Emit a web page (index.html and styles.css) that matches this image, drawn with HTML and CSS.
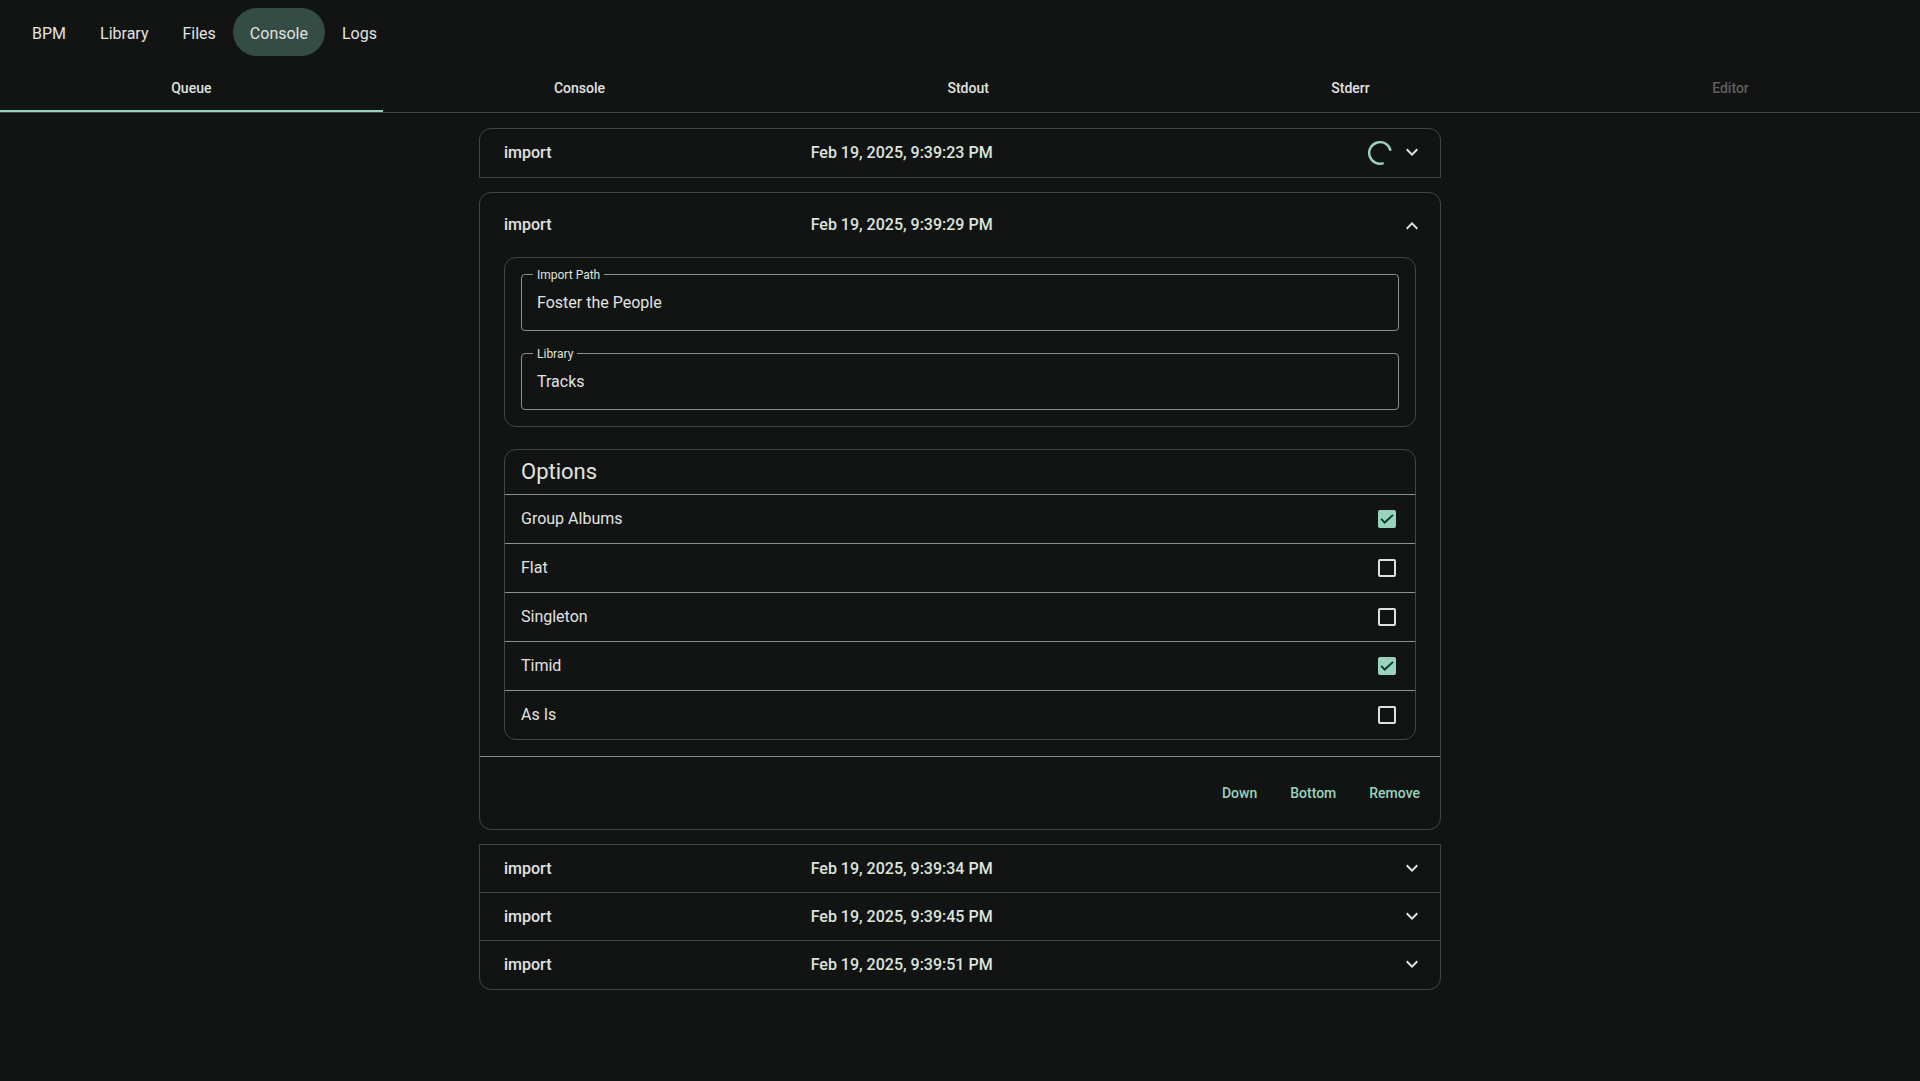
FILE: index.html
```html
<!DOCTYPE html>
<html lang="en">
<head>
<meta charset="utf-8">
<meta name="viewport" content="width=device-width, initial-scale=1">
<title>BPM – Console</title>
<link rel="stylesheet" href="styles.css">
</head>
<body>
<svg class="sprite" aria-hidden="true">
  <symbol id="chevron" viewBox="0 1 24 24"><path d="M16.59 8.59 12 13.17 7.41 8.59 6 10l6 6 6-6z"/></symbol>
</svg>
<header>
  <nav class="nav">
    <a class="nav-link" href="#bpm">BPM</a>
    <a class="nav-link" href="#library">Library</a>
    <a class="nav-link" href="#files">Files</a>
    <a class="nav-link nav-link-active" href="#console" aria-current="page">Console</a>
    <a class="nav-link" href="#logs">Logs</a>
  </nav>
  <div class="tabs" role="tablist">
    <button class="tab tab-active" type="button" role="tab" aria-selected="true">Queue</button>
    <button class="tab" type="button" role="tab">Console</button>
    <button class="tab" type="button" role="tab">Stdout</button>
    <button class="tab" type="button" role="tab">Stderr</button>
    <button class="tab" type="button" role="tab" disabled>Editor</button>
  </div>
</header>
<main class="queue">
  <section class="group group-first">
    <button class="row" type="button" aria-expanded="false">
      <span class="row-title">import</span>
      <span class="row-info">Feb 19, 2025, 9:39:23 PM
        <svg class="spinner" viewBox="0 0 24 24" aria-hidden="true"><path d="M15.7 22.1A10.8 10.8 0 1 1 22.6 9.8"/></svg>
      </span>
      <svg class="chevron" aria-hidden="true"><use href="#chevron"/></svg>
    </button>
  </section>

  <section class="group group-open">
    <button class="row row-open" type="button" aria-expanded="true">
      <span class="row-title">import</span>
      <span class="row-info">Feb 19, 2025, 9:39:29 PM</span>
      <svg class="chevron chevron-up" aria-hidden="true"><use href="#chevron"/></svg>
    </button>
    <div class="details">
      <div class="card fields">
        <div class="field">
          <label class="field-label" for="import-path">Import Path</label>
          <input class="field-input" id="import-path" type="text" value="Foster the People" readonly>
        </div>
        <div class="field">
          <label class="field-label" for="library">Library</label>
          <input class="field-input" id="library" type="text" value="Tracks" readonly>
        </div>
      </div>
      <div class="card">
        <h2 class="options-title">Options</h2>
        <label class="option">Group Albums<input class="check" type="checkbox" checked></label>
        <label class="option">Flat<input class="check" type="checkbox"></label>
        <label class="option">Singleton<input class="check" type="checkbox"></label>
        <label class="option">Timid<input class="check" type="checkbox" checked></label>
        <label class="option">As Is<input class="check" type="checkbox"></label>
      </div>
    </div>
    <div class="actions">
      <button class="action" type="button">Down</button>
      <button class="action" type="button">Bottom</button>
      <button class="action" type="button">Remove</button>
    </div>
  </section>

  <section class="group group-last">
    <button class="row" type="button" aria-expanded="false">
      <span class="row-title">import</span>
      <span class="row-info">Feb 19, 2025, 9:39:34 PM</span>
      <svg class="chevron" aria-hidden="true"><use href="#chevron"/></svg>
    </button>
    <button class="row" type="button" aria-expanded="false">
      <span class="row-title">import</span>
      <span class="row-info">Feb 19, 2025, 9:39:45 PM</span>
      <svg class="chevron" aria-hidden="true"><use href="#chevron"/></svg>
    </button>
    <button class="row" type="button" aria-expanded="false">
      <span class="row-title">import</span>
      <span class="row-info">Feb 19, 2025, 9:39:51 PM</span>
      <svg class="chevron" aria-hidden="true"><use href="#chevron"/></svg>
    </button>
  </section>
</main>
</body>
</html>
```
FILE: styles.css
```css
:root {
  --bg: #121413;
  --text: #e1e3e0;
  --text-soft: #dbe5de;
  --primary: #99d3bc;
  --on-primary: #003829;
  --active: #344c43;
  --border: #404945;
  --outline: #89938e;
}

* {
  box-sizing: border-box;
}

body {
  margin: 0;
  background: var(--bg);
  color: var(--text);
  font: 400 16px/24px Roboto, "Liberation Sans", sans-serif;
}

button,
input {
  font: inherit;
  color: inherit;
}

button {
  border: 0;
  padding: 0;
  background: none;
  cursor: pointer;
}

.sprite {
  display: none;
}

.nav {
  display: flex;
  padding: 8px 15px;
}

.nav-link {
  padding: 14px 17px 10px;
  border-radius: 24px;
  color: var(--text);
  text-decoration: none;
}

.nav-link-active {
  background: var(--active);
}

.tabs {
  display: flex;
  border-bottom: 1px solid var(--border);
}

.tab {
  flex: 1 1 auto;
  height: 48px;
  padding: 0 24px;
  border-top: 2px solid transparent;
  border-bottom: 2px solid transparent;
  font-size: 14px;
  font-weight: 500;
}

.tab-active {
  border-bottom-color: var(--primary);
}

.tab:disabled {
  color: #5d5f5e;
  cursor: default;
}

.queue {
  display: flex;
  flex-direction: column;
  gap: 14px;
  max-width: 962px;
  margin: 15px auto;
}

.group {
  border: 1px solid var(--border);
}

.group-first {
  border-radius: 12px 12px 0 0;
}

.group-open {
  border-radius: 12px;
}

.group-last {
  border-radius: 0 0 12px 12px;
}

.row {
  display: flex;
  align-items: center;
  width: 100%;
  height: 48px;
  padding: 0 16px 0 24px;
  font-weight: 500;
  text-align: left;
}

.row:not(:last-child):not(.row-open) {
  border-bottom: 1px solid var(--border);
}

.row-open {
  height: 64px;
}

.row-title {
  flex: 1 1 0;
  margin-right: 16px;
}

.row-info {
  display: flex;
  flex: 2 1 0;
  align-items: center;
  justify-content: space-between;
  margin-right: 8px;
  color: var(--text-soft);
}

.spinner {
  width: 24px;
  height: 24px;
  fill: none;
  stroke: var(--primary);
  stroke-width: 2.4;
}

.chevron {
  width: 24px;
  height: 24px;
  fill: var(--text-soft);
}

.chevron-up {
  transform: rotate(180deg);
}

.details {
  display: flex;
  flex-direction: column;
  gap: 22px;
  padding: 0 24px 16px;
}

.card {
  border: 1px solid var(--border);
  border-radius: 12px;
}

.fields {
  display: flex;
  flex-direction: column;
  gap: 22px;
  padding: 16px;
}

.field {
  position: relative;
}

.field-label {
  position: absolute;
  top: -7px;
  left: 12px;
  padding: 0 4px;
  background: var(--bg);
  color: var(--text-soft);
  font-size: 12px;
  line-height: 16px;
}

.field-input {
  display: block;
  width: 100%;
  height: 57px;
  padding: 0 15px;
  border: 1px solid var(--outline);
  border-radius: 4px;
  outline: 0;
  background: none;
}

.options-title {
  margin: 0;
  padding: 8px 16px;
  border-bottom: 1px solid var(--outline);
  font-size: 22px;
  font-weight: 400;
  line-height: 28px;
}

.option {
  display: flex;
  align-items: center;
  justify-content: space-between;
  height: 49px;
  padding: 0 16px;
  border-bottom: 1px solid var(--outline);
}

.option:last-child {
  height: 48px;
  border-bottom: 0;
}

.check {
  width: 18px;
  height: 18px;
  margin: 0 3px;
  border: 2px solid var(--text-soft);
  border-radius: 2px;
  appearance: none;
}

.check:checked {
  border: 0;
  background: var(--primary);
}

.check:checked::before {
  display: block;
  width: 18px;
  height: 18px;
  background: var(--on-primary);
  clip-path: polygon(14% 53%, 21% 46%, 37% 62%, 80% 23%, 87% 30%, 37% 78%);
  content: "";
}

.actions {
  display: flex;
  justify-content: flex-end;
  gap: 9px;
  padding: 16px 8px;
  border-top: 1px solid var(--outline);
}

.action {
  height: 40px;
  padding: 0 12px;
  color: var(--primary);
  font-size: 14px;
  font-weight: 500;
}
```
